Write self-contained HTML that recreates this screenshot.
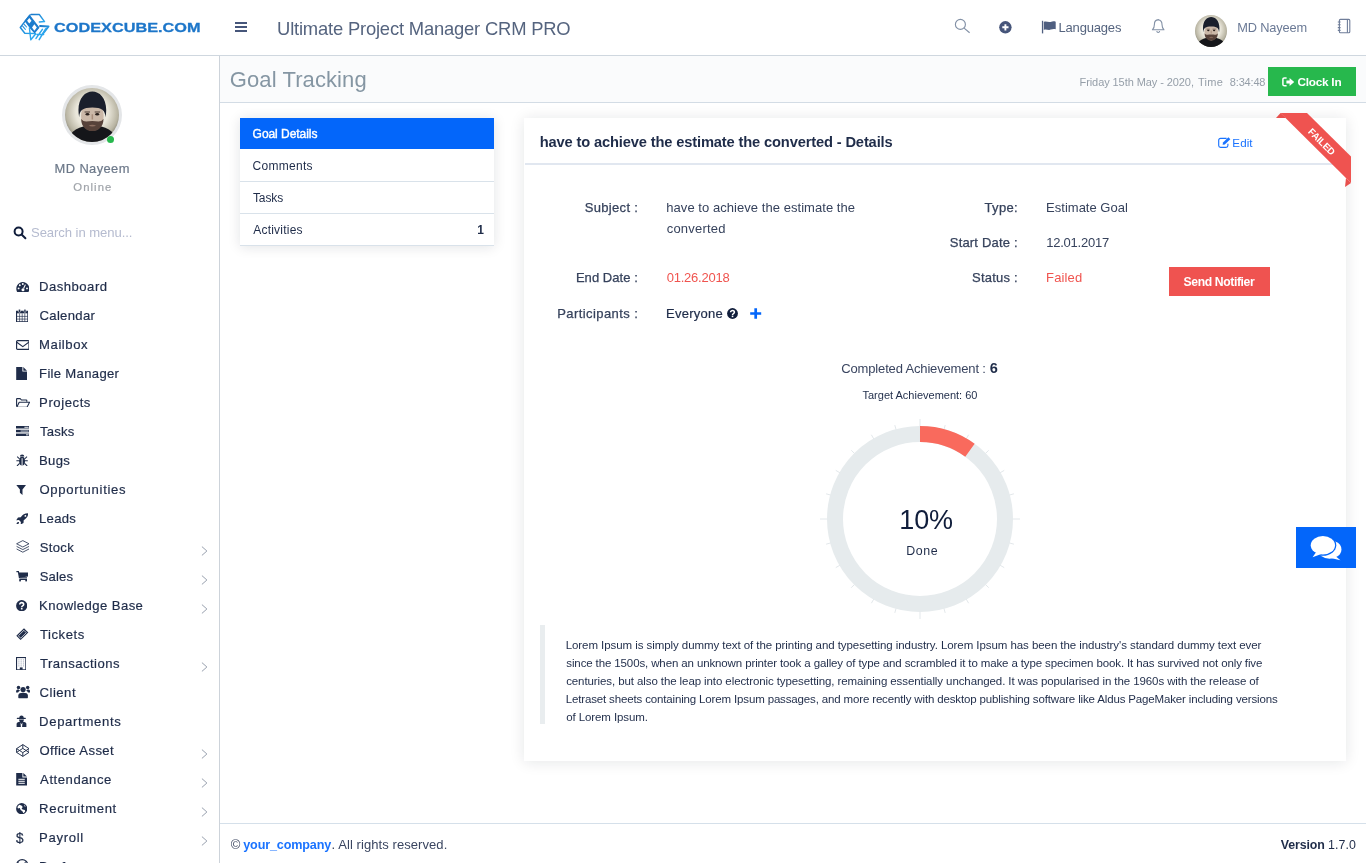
<!DOCTYPE html>
<html>
<head>
<meta charset="utf-8">
<title>Goal Tracking</title>
<style>
*{box-sizing:border-box;margin:0;padding:0}
html,body{width:1366px;height:863px;overflow:hidden;background:#fff;font-family:"Liberation Sans",sans-serif;color:#1f2c49}
.a{position:absolute;white-space:nowrap;line-height:20px}
.s{position:absolute;display:block}
</style>
</head>
<body>
<div id="w" style="position:absolute;left:0;top:0;width:1366px;height:863px;overflow:hidden;will-change:transform">
<div class="s" style="left:0;top:55px;width:1366px;height:1px;background:#cfd7df"></div>
<div class="s" style="left:219px;top:56px;width:1px;height:807px;background:#cdd3da"></div>
<div class="s" style="left:220px;top:56px;width:1146px;height:46px;background:#fafbfc"></div>
<div class="s" style="left:220px;top:102px;width:1146px;height:1px;background:#d3dce5"></div>
<div class="s" style="left:220px;top:823px;width:1146px;height:1px;background:#d5e0ea"></div>
<div class="s" style="left:240px;top:118px;width:254px;height:128px;background:#fff;box-shadow:0 1px 12px rgba(20,25,40,.12)"></div>
<div class="s" style="left:240px;top:118px;width:254px;height:31px;background:#0366fa"></div>
<div class="s" style="left:240px;top:181px;width:254px;height:1px;background:#d9e2ea"></div>
<div class="s" style="left:240px;top:213px;width:254px;height:1px;background:#d9e2ea"></div>
<div class="s" style="left:240px;top:245px;width:254px;height:1px;background:#d9e2ea"></div>
<div class="s" style="left:524px;top:118px;width:822px;height:643px;background:#fff;box-shadow:0 1px 14px rgba(20,25,40,.11)"></div>
<div class="s" style="left:525px;top:163px;width:820px;height:2px;background:#e1e7f0"></div>
<svg class="s" style="left:15px;top:8px" width="40" height="40" viewBox="0 0 40 40" fill="none" stroke-linejoin="round" stroke-linecap="round">
<defs><linearGradient id="lg" x1="0" y1="0" x2="1" y2="1"><stop offset="0" stop-color="#1b78c9"/><stop offset="1" stop-color="#2cabf0"/></linearGradient></defs>
<g stroke="url(#lg)" stroke-width="1.5">
<path d="M15 7 L5.3 19.5 L9.8 25.3 L20.5 25.4"/>
<path d="M16 6.6 H24.4 L29.5 13.6 L24.4 13.9"/>
<path d="M14.6 7.6 L18.6 12.9 L23.8 19.5 L19.6 24.6 L15 19.5 L10.2 12.9 Z" fill="#1c7ccd" stroke="#1c7ccd" stroke-width="1.2"/>
<path d="M14.3 10 L16.5 12.7 L14.3 15.5 L12.1 12.7 Z" fill="#fff" stroke="none"/>
<path d="M19.4 16.3 L21.8 19.5 L19.4 22.7 L17 19.5 Z" fill="#fff" stroke="none"/>
<path d="M7.8 18.4 L10.4 21.4 M9.4 16.6 L11.6 19" stroke-width="1.1"/>
<path d="M25 18 L33.6 18.5 L27.6 26.2" stroke-width="1.8"/>
<path d="M30.6 20.8 L24.2 31.6 M27.4 21.4 L21 30.4 M28.6 26.4 L22 26.6" stroke-width="1.5" stroke="#2ba6ee"/>
<path d="M14.4 20 L15.8 31.8 L20.6 26" stroke="#2ba6ee" stroke-width="1.4"/>
</g></svg>
<svg class="s" style="left:235px;top:22px" width="12" height="10" viewBox="0 0 12 10" shape-rendering="crispEdges"><rect x="0" y="0" width="12" height="2" fill="#46567a"/><rect x="0" y="4" width="12" height="2" fill="#46567a"/><rect x="0" y="8" width="12" height="2" fill="#46567a"/></svg>
<svg class="s" style="left:954px;top:18px" width="17" height="16" viewBox="0 0 17 16" fill="none" stroke="#8391a6" stroke-width="1.15"><circle cx="6.4" cy="6.4" r="5"/><path d="M10.1 10.1 L15.6 14.8"/></svg>
<svg class="s" style="left:999px;top:20.5px" width="13" height="13" viewBox="0 0 13 13"><circle cx="6.4" cy="6.3" r="6.2" fill="#46557a"/><path d="M6.4 3.2 V9.4 M3.3 6.3 H9.5" stroke="#fff" stroke-width="1.9"/></svg>
<svg class="s" style="left:1041px;top:20px" width="16" height="14" viewBox="0 0 16 14"><rect x="0.9" y="0.8" width="1.3" height="12.6" fill="#4f5f80"/><path d="M2.8 2 C5 0.6 7.2 2.8 9.6 1.9 C11.6 1.1 13 0.9 14.7 1.7 V9.3 C12.8 8.5 11.4 9 9.8 9.6 C7.2 10.6 5 8.6 2.8 10 Z" fill="#4f5f80"/></svg>
<svg class="s" style="left:1151px;top:18px" width="15" height="16" viewBox="0 0 15 16" fill="none" stroke="#8391a6" stroke-width="1.1" stroke-linejoin="round"><path d="M7.2 1.9 C4.4 1.9 3.4 4.2 3.4 6.4 C3.4 9 2.6 10.6 1.4 11.8 H13 C11.8 10.6 11 9 11 6.4 C11 4.2 10 1.9 7.2 1.9 Z"/><path d="M5.8 13 C6 14.9 8.4 14.9 8.6 13"/><path d="M7.2 0.9 V1.9"/></svg>
<div class="s" style="left:1195px;top:15px;width:32px;height:32px;border-radius:50%;overflow:hidden"><svg width="32" height="32" viewBox="0 0 32 32"><defs><radialGradient id="g1" cx="50%" cy="45%" r="60%"><stop offset="0" stop-color="#f6f4ee"/><stop offset=".5" stop-color="#e9e6da"/><stop offset=".8" stop-color="#b9b5a3"/><stop offset="1" stop-color="#6f6c60"/></radialGradient></defs><rect width="32" height="32" fill="url(#g1)"/><path d="M1.6 32 C2.6 25 8.6 22.4 16.2 22.4 C23.8 22.4 29.8 25 30.8 32 Z" fill="#15161a"/><ellipse cx="16.2" cy="16.6" rx="6.7" ry="8.8" fill="#cbb8a8"/><path d="M8.4 17.4 C4.6 -3 27.8 -3 24 17.4 C23.8 13.2 21.8 11.6 16.2 11.6 C10.6 11.6 8.6 13.2 8.4 17.4 Z" fill="#1a1f2c"/><path d="M9.6 18.2 C9.4 28 23 28 22.8 18.2 C21.4 20.6 19.2 19.6 16.2 19.6 C13.2 19.6 11 20.6 9.6 18.2 Z" fill="#57423a"/><path d="M14 22.4 C15.2 21.6 17.2 21.6 18.4 22.4 C17.2 23 15.2 23 14 22.4 Z" fill="#8d6f61"/><ellipse cx="13.3" cy="15.6" rx="1.15" ry="0.75" fill="#2b211d"/><ellipse cx="19.1" cy="15.6" rx="1.15" ry="0.75" fill="#2b211d"/><path d="M11.6 14.2 H14.8 M17.6 14.2 H20.8" stroke="#4a3b33" stroke-width="0.6"/><path d="M16.2 15.6 V18.6" stroke="#a88d7b" stroke-width="0.9"/></svg></div>
<svg class="s" style="left:1337px;top:18px" width="14" height="16" viewBox="0 0 14 16" fill="none" stroke="#6f7d99" stroke-width="1.1"><rect x="2.4" y="1.4" width="10.4" height="13.4" rx="1"/><path d="M0.8 4 H3.6 M0.8 6.8 H3.6 M0.8 9.6 H3.6 M0.8 12.4 H3.6 M10.4 1.4 V14.8"/></svg>
<div class="s" style="left:1268px;top:67px;width:88px;height:29px;background:#27b84d"></div>
<svg class="s" style="left:1282px;top:77px" width="13" height="10" viewBox="0 0 13 10"><path d="M4.6 1 H2.4 C1.4 1 0.9 1.6 0.9 2.4 V7.4 C0.9 8.2 1.4 8.8 2.4 8.8 H4.6" fill="none" stroke="#fff" stroke-width="1.5"/><path d="M4.4 3.4 H7.6 V0.9 L12.2 4.9 L7.6 8.9 V6.4 H4.4 Z" fill="#fff"/></svg>
<div class="s" style="left:62px;top:85px;width:60px;height:60px;border-radius:50%;background:#e4e6e8"></div>
<div class="s" style="left:65px;top:88px;width:54px;height:54px;border-radius:50%;overflow:hidden"><svg width="54" height="54" viewBox="0 0 32 32"><defs><radialGradient id="g2" cx="50%" cy="45%" r="60%"><stop offset="0" stop-color="#f6f4ee"/><stop offset=".5" stop-color="#e9e6da"/><stop offset=".8" stop-color="#b9b5a3"/><stop offset="1" stop-color="#6f6c60"/></radialGradient></defs><rect width="32" height="32" fill="url(#g2)"/><path d="M1.6 32 C2.6 25 8.6 22.4 16.2 22.4 C23.8 22.4 29.8 25 30.8 32 Z" fill="#15161a"/><ellipse cx="16.2" cy="16.6" rx="6.7" ry="8.8" fill="#cbb8a8"/><path d="M8.4 17.4 C4.6 -3 27.8 -3 24 17.4 C23.8 13.2 21.8 11.6 16.2 11.6 C10.6 11.6 8.6 13.2 8.4 17.4 Z" fill="#1a1f2c"/><path d="M9.6 18.2 C9.4 28 23 28 22.8 18.2 C21.4 20.6 19.2 19.6 16.2 19.6 C13.2 19.6 11 20.6 9.6 18.2 Z" fill="#57423a"/><path d="M14 22.4 C15.2 21.6 17.2 21.6 18.4 22.4 C17.2 23 15.2 23 14 22.4 Z" fill="#8d6f61"/><ellipse cx="13.3" cy="15.6" rx="1.15" ry="0.75" fill="#2b211d"/><ellipse cx="19.1" cy="15.6" rx="1.15" ry="0.75" fill="#2b211d"/><path d="M11.6 14.2 H14.8 M17.6 14.2 H20.8" stroke="#4a3b33" stroke-width="0.6"/><path d="M16.2 15.6 V18.6" stroke="#a88d7b" stroke-width="0.9"/></svg></div>
<div class="s" style="left:107px;top:135.8px;width:7.3px;height:7.3px;border-radius:50%;background:#27b84d"></div>
<svg class="s" style="left:12.6px;top:226px" width="14" height="14" viewBox="0 0 14 14" fill="none" stroke="#101d3b" stroke-width="2"><circle cx="5.6" cy="5.5" r="4"/><path d="M8.6 8.6 L12.4 12.2" stroke-linecap="round"/></svg>
<svg class="s" style="left:15.8px;top:282px" width="13.6" height="10" viewBox="0 0 13.6 10"><path d="M6.8 0 A6.8 6.8 0 0 0 1 9.8 C1.2 10 1.4 10 1.6 10 H12 C12.2 10 12.4 10 12.6 9.8 A6.8 6.8 0 0 0 6.8 0 Z" fill="#1f2c49"/><circle cx="2.6" cy="6.4" r="0.95" fill="#fff"/><circle cx="3.8" cy="3.2" r="0.95" fill="#fff"/><circle cx="6.8" cy="2" r="0.95" fill="#fff"/><circle cx="11" cy="6.4" r="0.95" fill="#fff"/><path d="M9.4 2.6 L7.6 6.6" stroke="#fff" stroke-width="1.1"/><circle cx="7" cy="7.8" r="1.5" fill="#fff"/></svg>
<svg class="s" style="left:15.8px;top:308.6px" width="12.4" height="13.4" viewBox="0 0 12.4 13.4"><rect x="0.55" y="2.3" width="11.3" height="10.5" fill="none" stroke="#1f2c49" stroke-width="1.1"/><rect x="0.55" y="2.3" width="11.3" height="2" fill="#1f2c49"/><path d="M0.6 7.4 H11.8 M0.6 10.1 H11.8 M3.6 4.4 V12.8 M6.2 4.4 V12.8 M8.8 4.4 V12.8" stroke="#1f2c49" stroke-width="0.65"/><rect x="2.5" y="0.2" width="1.9" height="3.2" rx="0.8" fill="#1f2c49" stroke="#fff" stroke-width="0.5"/><rect x="8" y="0.2" width="1.9" height="3.2" rx="0.8" fill="#1f2c49" stroke="#fff" stroke-width="0.5"/></svg>
<svg class="s" style="left:15.8px;top:340px" width="13.6" height="10" viewBox="0 0 13.6 10"><rect x="0.6" y="0.6" width="12.4" height="8.8" rx="1" fill="none" stroke="#1f2c49" stroke-width="1.15"/><path d="M0.8 2.2 L6.8 6.6 L12.8 2.2" fill="none" stroke="#1f2c49" stroke-width="1.15"/></svg>
<svg class="s" style="left:15.8px;top:367px" width="11.4" height="13.2" viewBox="0 0 11.4 13.2"><path d="M0.2 0 H6.4 V4.6 H11 V13.2 H0.2 Z" fill="#1f2c49"/><path d="M7.3 0 L11 3.7 H7.3 Z" fill="#1f2c49"/></svg>
<svg class="s" style="left:15.8px;top:397.6px" width="14.4" height="9.8" viewBox="0 0 14.4 9.8"><path d="M0.6 8.6 V1.2 C0.6 0.8 0.8 0.6 1.2 0.6 H4.2 L5.4 2 H10.2 C10.6 2 10.8 2.2 10.8 2.6 V3.8" fill="none" stroke="#1f2c49" stroke-width="1.1" stroke-linejoin="round"/><path d="M0.8 9.2 L3.2 4.2 H13.6 L11 9.2 Z" fill="none" stroke="#1f2c49" stroke-width="1.1" stroke-linejoin="round"/></svg>
<svg class="s" style="left:15.8px;top:426px" width="13.6" height="10.2" viewBox="0 0 13.6 10.2"><rect x="0" y="0" width="13.4" height="2.5" fill="#1f2c49"/><rect x="0" y="3.8" width="13.4" height="2.5" fill="#1f2c49"/><rect x="0" y="7.6" width="13.4" height="2.5" fill="#1f2c49"/><rect x="8.4" y="0.8" width="4.2" height="0.9" fill="#fff"/><rect x="4.6" y="4.6" width="8" height="0.9" fill="#dfe3ea"/><rect x="10" y="8.4" width="2.6" height="0.9" fill="#fff"/></svg>
<svg class="s" style="left:16px;top:454px" width="12.2" height="12.4" viewBox="0 0 12.2 12.4"><ellipse cx="6.1" cy="7.2" rx="2.9" ry="4.4" fill="#1f2c49"/><path d="M3.9 2.6 A2.2 2.2 0 0 1 8.3 2.6 Z" fill="#1f2c49"/><path d="M0.4 6.8 H11.8 M1.2 2.6 L3.6 5 M11 2.6 L8.6 5 M1 12 L3.6 9.4 M11.2 12 L8.6 9.4" stroke="#1f2c49" stroke-width="1.05"/><path d="M6.1 4.2 V11.6" stroke="#fff" stroke-width="0.9"/></svg>
<svg class="s" style="left:15.8px;top:485px" width="10.4" height="10" viewBox="0 0 10.4 10"><path d="M0.3 0 H10.1 L6.5 4.4 V10 L3.9 7.8 V4.4 Z" fill="#1f2c49"/></svg>
<svg class="s" style="left:15.8px;top:512.6px" width="12.4" height="11.6" viewBox="0 0 12.4 11.6"><path d="M12.2 0.2 C8.6 0.2 6.6 1.6 4.8 4.2 L2 4.4 L0.2 7.2 L3 7 L4.9 8.9 L4.7 11.5 L7.5 9.9 L7.7 7.2 C10.6 5.4 12.2 3.6 12.2 0.2 Z" fill="#1f2c49"/><path d="M0.5 11.4 C0.4 9.6 1.6 8.6 2.9 9 C3.3 10.4 2.3 11.5 0.5 11.4 Z" fill="#1f2c49"/><circle cx="9.4" cy="2.9" r="0.9" fill="#fff"/></svg>
<svg class="s" style="left:15.8px;top:540px" width="13.6" height="13.2" viewBox="0 0 13.6 13.2"><path d="M6.8 0.6 L13 3.8 L6.8 7 L0.6 3.8 Z M0.6 6.4 L6.8 9.6 L13 6.4 M0.6 9 L6.8 12.2 L13 9" fill="none" stroke="#2a3754" stroke-width="0.85" stroke-linejoin="round"/></svg>
<svg class="s" style="left:15.8px;top:571.4px" width="12.4" height="10.4" viewBox="0 0 12.4 10.4"><path d="M0.4 0.7 H2.4 L3.4 6.8 H11 M3.6 8.4 H11" fill="none" stroke="#1f2c49" stroke-width="1.15"/><path d="M2.7 1.6 H12.1 V5.6 L3.4 6.8 Z" fill="#1f2c49"/><rect x="3.2" y="8.4" width="1.7" height="2" fill="#1f2c49"/><rect x="9.3" y="8.4" width="1.7" height="2" fill="#1f2c49"/></svg>
<svg class="s" style="left:15.8px;top:600px" width="11.4" height="11.4" viewBox="0 0 11.4 11.4"><circle cx="5.7" cy="5.7" r="5.6" fill="#1f2c49"/><path d="M3.7 4.5 C3.7 2 7.7 2 7.7 4.5 C7.7 5.9 5.7 5.9 5.7 7.2" fill="none" stroke="#fff" stroke-width="1.55"/><rect x="4.9" y="7.9" width="1.65" height="1.6" fill="#fff"/></svg>
<svg class="s" style="left:16px;top:628.2px" width="12.6" height="12.4" viewBox="0 0 12.6 12.4"><path d="M8 0.3 L12.3 4.6 L4.6 12.1 L0.3 7.8 Z" fill="#1f2c49"/><path d="M7.9 2.3 L10.3 4.7 L4.7 10.2 L2.3 7.8 Z" fill="none" stroke="#fff" stroke-width="0.7"/></svg>
<svg class="s" style="left:15.8px;top:656.6px" width="10.4" height="13.4" viewBox="0 0 10.4 13.4"><rect x="0.55" y="0.55" width="9.3" height="12.3" fill="none" stroke="#1f2c49" stroke-width="1.1"/><path d="M2.3 2.9 H8.1 M2.3 4.9 H8.1 M2.3 6.9 H8.1 M2.3 8.9 H8.1" stroke="#9aa2b4" stroke-width="0.9" stroke-dasharray="1.2 1.1"/><rect x="3.8" y="10.4" width="2.8" height="2.4" fill="#1f2c49"/></svg>
<svg class="s" style="left:15.6px;top:685.4px" width="14.2" height="13.4" viewBox="0 0 14.2 13.4"><circle cx="7.1" cy="4.6" r="2.6" fill="#1f2c49"/><path d="M2.9 13.2 C2.5 13.2 2.3 13 2.3 12.6 V10.4 C2.3 8.6 4.2 7.8 7.1 7.8 C10 7.8 11.9 8.6 11.9 10.4 V12.6 C11.9 13 11.7 13.2 11.3 13.2 Z" fill="#1f2c49"/><circle cx="2.5" cy="2.4" r="1.75" fill="#1f2c49"/><circle cx="11.7" cy="2.4" r="1.75" fill="#1f2c49"/><path d="M0.1 7.6 V6.2 C0.1 5 1.1 4.4 2.5 4.5 L4.1 5.8 C3 6.3 2.3 6.9 2.1 7.6 Z" fill="#1f2c49"/><path d="M14.1 7.6 V6.2 C14.1 5 13.1 4.4 11.7 4.5 L10.1 5.8 C11.2 6.3 11.9 6.9 12.1 7.6 Z" fill="#1f2c49"/></svg>
<svg class="s" style="left:16.2px;top:714.6px" width="10.6" height="12.6" viewBox="0 0 10.6 12.6"><path d="M3.3 2.9 C3.1 -0.3 7.9 -0.3 7.7 2.9 Z" fill="#1f2c49"/><rect x="0.8" y="2.8" width="9" height="1.2" rx="0.5" fill="#1f2c49"/><path d="M3 4.6 H8 C8 5.6 7.4 6.2 7 6.5 L9.6 7.4 C10.2 7.8 10.4 8.4 10.4 9 V12.4 H0.6 V9 C0.6 8.4 0.8 7.8 1.4 7.4 L4 6.5 C3.6 6.2 3 5.6 3 4.6 Z" fill="#1f2c49"/><path d="M4.5 7.6 L5.5 9.2 L6.5 7.6 L6.1 12 H4.9 Z" fill="#fff"/></svg>
<svg class="s" style="left:15.8px;top:743.8px" width="13.6" height="13" viewBox="0 0 13.6 13"><path d="M6.8 0.6 L13 4.6 V8.4 L6.8 12.4 L0.6 8.4 V4.6 Z M0.6 4.6 L6.8 8.6 L13 4.6 M0.6 8.4 L6.8 4.4 L13 8.4 M6.8 0.6 V4.4 M6.8 8.6 V12.4" fill="none" stroke="#1f2c49" stroke-width="0.95" stroke-linejoin="round"/></svg>
<svg class="s" style="left:15.8px;top:773.2px" width="11.4" height="12.6" viewBox="0 0 11.4 12.6"><path d="M0.2 0 H6.4 V4.4 H11 V12.6 H0.2 Z" fill="#1f2c49"/><path d="M7.3 0 L11 3.6 H7.3 Z" fill="#1f2c49"/><path d="M2.4 6.3 H8.8 M2.4 8.3 H8.8 M2.4 10.3 H8.8" stroke="#fff" stroke-width="1"/></svg>
<svg class="s" style="left:15.8px;top:802.8px" width="11.4" height="11.4" viewBox="0 0 11.4 11.4"><circle cx="5.7" cy="5.7" r="5.6" fill="#1f2c49"/><path d="M3.2 1.8 L5.4 2.4 L6.8 4 L5.6 5.6 L6.6 6.6 L8.8 7 L9.2 8.6 L7.4 10.2 L6.4 8.2 L4.6 7 L3.8 5 L2 5.6 L1.4 4 Z" fill="#fff"/><path d="M8 1.6 L9.8 3.4 L8.6 3.6 Z" fill="#fff"/></svg>
<svg class="s" style="left:15.8px;top:859px" width="12.4" height="12.4" viewBox="0 0 12.4 12.4"><circle cx="6.2" cy="6.2" r="5.6" fill="none" stroke="#1f2c49" stroke-width="1.1"/><path d="M1.6 3.4 C5 5 8 8 9 11.4 M0.8 7 C4.6 7 8.4 5.2 10.4 2.2" fill="none" stroke="#1f2c49" stroke-width="0.9"/></svg>
<div class="a" id="dollar" style="left:15.9px;top:829px;font-size:13.6px;color:#1f2c49;-webkit-text-stroke:.2px #1f2c49;transform:scaleY(1.06);transform-origin:50% 60%">$</div>
<svg class="s" style="left:201px;top:546.2px" width="7" height="10" viewBox="0 0 7 10" fill="none" stroke="#98a0ae" stroke-width="1"><path d="M0.9 0.6 L5.9 5 L0.9 9.4"/></svg>
<svg class="s" style="left:201px;top:575.2px" width="7" height="10" viewBox="0 0 7 10" fill="none" stroke="#98a0ae" stroke-width="1"><path d="M0.9 0.6 L5.9 5 L0.9 9.4"/></svg>
<svg class="s" style="left:201px;top:604.2px" width="7" height="10" viewBox="0 0 7 10" fill="none" stroke="#98a0ae" stroke-width="1"><path d="M0.9 0.6 L5.9 5 L0.9 9.4"/></svg>
<svg class="s" style="left:201px;top:662.2px" width="7" height="10" viewBox="0 0 7 10" fill="none" stroke="#98a0ae" stroke-width="1"><path d="M0.9 0.6 L5.9 5 L0.9 9.4"/></svg>
<svg class="s" style="left:201px;top:749.2px" width="7" height="10" viewBox="0 0 7 10" fill="none" stroke="#98a0ae" stroke-width="1"><path d="M0.9 0.6 L5.9 5 L0.9 9.4"/></svg>
<svg class="s" style="left:201px;top:778.2px" width="7" height="10" viewBox="0 0 7 10" fill="none" stroke="#98a0ae" stroke-width="1"><path d="M0.9 0.6 L5.9 5 L0.9 9.4"/></svg>
<svg class="s" style="left:201px;top:807.2px" width="7" height="10" viewBox="0 0 7 10" fill="none" stroke="#98a0ae" stroke-width="1"><path d="M0.9 0.6 L5.9 5 L0.9 9.4"/></svg>
<svg class="s" style="left:201px;top:836.2px" width="7" height="10" viewBox="0 0 7 10" fill="none" stroke="#98a0ae" stroke-width="1"><path d="M0.9 0.6 L5.9 5 L0.9 9.4"/></svg>
<svg class="s" style="left:201px;top:865.2px" width="7" height="10" viewBox="0 0 7 10" fill="none" stroke="#98a0ae" stroke-width="1"><path d="M0.9 0.6 L5.9 5 L0.9 9.4"/></svg>
<svg class="s" style="left:1217.5px;top:136.6px" width="13" height="11" viewBox="0 0 13 11" fill="none" stroke="#1a73ff" stroke-width="1.15"><path d="M8.6 1.4 H2.6 C1.4 1.4 0.7 2.1 0.7 3.2 V8.5 C0.7 9.6 1.4 10.3 2.6 10.3 H8 C9.2 10.3 9.9 9.6 9.9 8.5 V6.8"/><path d="M4.6 7.8 L5 5.6 L10.4 0.3 L12.3 2.2 L6.8 7.4 Z" fill="#1a73ff" stroke="none"/></svg>
<svg class="s" style="left:726.8px;top:308px" width="11" height="11" viewBox="0 0 11.4 11.4"><circle cx="5.7" cy="5.7" r="5.6" fill="#101d3b"/><path d="M3.7 4.5 C3.7 2 7.7 2 7.7 4.5 C7.7 5.9 5.7 5.9 5.7 7.2" fill="none" stroke="#fff" stroke-width="1.55"/><rect x="4.9" y="7.9" width="1.65" height="1.6" fill="#fff"/></svg>
<svg class="s" style="left:750.2px;top:307.8px" width="11.4" height="11" viewBox="0 0 11.4 11"><path d="M5.7 0.2 V10.8 M0.2 5.5 H11.2" stroke="#0366fa" stroke-width="2.7"/></svg>
<div class="s" style="left:1169px;top:267px;width:101px;height:29px;background:#ef5350"></div>
<svg class="s" style="left:800px;top:400px" width="240" height="240" viewBox="800 400 240 240"><path d="M920.0 427.0 L920.0 419.0 M943.8 430.1 L945.2 425.1 M966.0 439.3 L968.6 434.8 M985.1 453.9 L988.7 450.3 M999.7 473.0 L1004.2 470.4 M1008.9 495.2 L1013.9 493.8 M1012.0 519.0 L1020.0 519.0 M1008.9 542.8 L1013.9 544.2 M999.7 565.0 L1004.2 567.6 M985.1 584.1 L988.7 587.7 M966.0 598.7 L968.6 603.2 M943.8 607.9 L945.2 612.9 M920.0 611.0 L920.0 619.0 M896.2 607.9 L894.8 612.9 M874.0 598.7 L871.4 603.2 M854.9 584.1 L851.3 587.7 M840.3 565.0 L835.8 567.6 M831.1 542.8 L826.1 544.2 M828.0 519.0 L820.0 519.0 M831.1 495.2 L826.1 493.8 M840.3 473.0 L835.8 470.4 M854.9 453.9 L851.3 450.3 M874.0 439.3 L871.4 434.8 M896.2 430.1 L894.8 425.1" stroke="#e3e8eb" stroke-width="1" fill="none"/><circle cx="920" cy="519" r="85" fill="none" stroke="#e6ebed" stroke-width="16"/><path d="M920 434 A85 85 0 0 1 969.96 450.23" fill="none" stroke="#f96a5d" stroke-width="16"/></svg>
<div class="s" style="left:540px;top:625px;width:5px;height:99px;background:#e9edef"></div>
<svg class="s" style="left:1270px;top:108px" width="90" height="90" viewBox="1270 108 90 90">
<path d="M1276 118 L1280.5 113 L1286 118 Z" fill="#e8504d"/>
<path d="M1346 178 L1351 183 L1345 187 Z" fill="#e8504d"/>
<path d="M1280.5 113 L1307 113 L1351 156.5 L1351 183 Z" fill="#ef5350"/>
<text x="1321.8" y="141.6" transform="rotate(45 1321.8 141.6)" text-anchor="middle" dominant-baseline="central" font-family="Liberation Sans, sans-serif" font-size="9.6" font-weight="bold" fill="#fff" letter-spacing="-0.1">FAILED</text>
</svg>
<div class="s" style="left:1296px;top:527px;width:60px;height:41px;background:#0366fa"></div>
<svg class="s" style="left:1310px;top:535px" width="33" height="26.8" viewBox="0 0 32 26"><ellipse cx="19" cy="14" rx="11.5" ry="9" fill="#fff"/><path d="M24 20 L29.5 24.5 L19 22 Z" fill="#fff"/><ellipse cx="12.5" cy="10" rx="13" ry="10.2" fill="#0366fa"/><ellipse cx="12.5" cy="10" rx="11.8" ry="9" fill="#fff"/><path d="M6 16.5 L2.5 21.5 L11 18.5 Z" fill="#fff"/></svg>
<div class="a" id="logotxt" style="left:54.29px;top:18px;font-size:13.5px;color:#1d76c9;font-weight:bold;transform:scaleX(1.2061);transform-origin:0 0;-webkit-text-stroke:.3px #1d76c9">CODEXCUBE.COM</div>
<div class="a" id="apptitle" style="left:277.05px;top:19px;font-size:18.4px;color:#55647f;letter-spacing:-0.188px">Ultimate Project Manager CRM PRO</div>
<div class="a" id="lang" style="left:1058.48px;top:18px;font-size:13px;color:#55647f;letter-spacing:-0.177px">Languages</div>
<div class="a" id="uname" style="left:1237.25px;top:18px;font-size:12.8px;color:#6b7a96;letter-spacing:-0.145px">MD Nayeem</div>
<div class="a" id="ptitle" style="left:229.77px;top:70px;font-size:22px;color:#8596a3;letter-spacing:0.095px">Goal Tracking</div>
<div class="a" id="pd1" style="left:1079.5px;top:72px;font-size:11px;color:#959ea8;letter-spacing:-0.078px">Friday 15th May - 2020,</div>
<div class="a" id="pd2" style="left:1198.1px;top:72px;font-size:11px;color:#959ea8;letter-spacing:0.211px">Time</div>
<div class="a" id="pd3" style="left:1229.85px;top:72px;font-size:11px;color:#959ea8;letter-spacing:-0.181px">8:34:48</div>
<div class="a" id="clock" style="left:1297.55px;top:72px;font-size:11.8px;color:#fff;font-weight:bold;letter-spacing:-0.263px">Clock In</div>
<div class="a" id="sname" style="left:54.59px;top:159px;font-size:12.9px;color:#6c7889;letter-spacing:0.399px;-webkit-text-stroke:.2px #6c7889">MD Nayeem</div>
<div class="a" id="sonline" style="left:73.3px;top:177px;font-size:11.3px;color:#a0a4aa;letter-spacing:1.064px;-webkit-text-stroke:.2px #a0a4aa">Online</div>
<div class="a" id="ssearch" style="left:30.99px;top:223px;font-size:13.1px;color:#b5bbcf;letter-spacing:-0.074px">Search in menu...</div>
<div class="a" id="m0" style="left:39.08px;top:277px;font-size:13.1px;color:#1f2c49;letter-spacing:0.484px;-webkit-text-stroke:.2px #1f2c49">Dashboard</div>
<div class="a" id="m1" style="left:39.49px;top:306px;font-size:13.1px;color:#1f2c49;letter-spacing:0.331px;-webkit-text-stroke:.2px #1f2c49">Calendar</div>
<div class="a" id="m2" style="left:39.08px;top:335px;font-size:13.1px;color:#1f2c49;letter-spacing:0.564px;-webkit-text-stroke:.2px #1f2c49">Mailbox</div>
<div class="a" id="m3" style="left:39.08px;top:364px;font-size:13.1px;color:#1f2c49;letter-spacing:0.312px;-webkit-text-stroke:.2px #1f2c49">File Manager</div>
<div class="a" id="m4" style="left:39.08px;top:393px;font-size:13.1px;color:#1f2c49;letter-spacing:0.573px;-webkit-text-stroke:.2px #1f2c49">Projects</div>
<div class="a" id="m5" style="left:39.9px;top:422px;font-size:13.1px;color:#1f2c49;letter-spacing:0.257px;-webkit-text-stroke:.2px #1f2c49">Tasks</div>
<div class="a" id="m6" style="left:39.08px;top:451px;font-size:13.1px;color:#1f2c49;letter-spacing:0.291px;-webkit-text-stroke:.2px #1f2c49">Bugs</div>
<div class="a" id="m7" style="left:39.49px;top:480px;font-size:13.1px;color:#1f2c49;letter-spacing:0.684px;-webkit-text-stroke:.2px #1f2c49">Opportunities</div>
<div class="a" id="m8" style="left:39.08px;top:509px;font-size:13.1px;color:#1f2c49;letter-spacing:0.26px;-webkit-text-stroke:.2px #1f2c49">Leads</div>
<div class="a" id="m9" style="left:39.69px;top:538px;font-size:13.1px;color:#1f2c49;letter-spacing:0.335px;-webkit-text-stroke:.2px #1f2c49">Stock</div>
<div class="a" id="m10" style="left:39.69px;top:567px;font-size:13.1px;color:#1f2c49;letter-spacing:0.162px;-webkit-text-stroke:.2px #1f2c49">Sales</div>
<div class="a" id="m11" style="left:39.08px;top:596px;font-size:13.1px;color:#1f2c49;letter-spacing:0.426px;-webkit-text-stroke:.2px #1f2c49">Knowledge Base</div>
<div class="a" id="m12" style="left:39.9px;top:625px;font-size:13.1px;color:#1f2c49;letter-spacing:0.585px;-webkit-text-stroke:.2px #1f2c49">Tickets</div>
<div class="a" id="m13" style="left:39.9px;top:654px;font-size:13.1px;color:#1f2c49;letter-spacing:0.473px;-webkit-text-stroke:.2px #1f2c49">Transactions</div>
<div class="a" id="m14" style="left:39.49px;top:683px;font-size:13.1px;color:#1f2c49;letter-spacing:0.515px;-webkit-text-stroke:.2px #1f2c49">Client</div>
<div class="a" id="m15" style="left:39.08px;top:712px;font-size:13.1px;color:#1f2c49;letter-spacing:0.674px;-webkit-text-stroke:.2px #1f2c49">Departments</div>
<div class="a" id="m16" style="left:39.49px;top:741px;font-size:13.1px;color:#1f2c49;letter-spacing:0.417px;-webkit-text-stroke:.2px #1f2c49">Office Asset</div>
<div class="a" id="m17" style="left:40.1px;top:770px;font-size:13.1px;color:#1f2c49;letter-spacing:0.55px;-webkit-text-stroke:.2px #1f2c49">Attendance</div>
<div class="a" id="m18" style="left:39.08px;top:799px;font-size:13.1px;color:#1f2c49;letter-spacing:0.656px;-webkit-text-stroke:.2px #1f2c49">Recruitment</div>
<div class="a" id="m19" style="left:39.08px;top:828px;font-size:13.1px;color:#1f2c49;letter-spacing:0.691px;-webkit-text-stroke:.2px #1f2c49">Payroll</div>
<div class="a" id="m20" style="left:39.08px;top:857px;font-size:13.1px;color:#1f2c49;letter-spacing:0.646px;-webkit-text-stroke:.2px #1f2c49">Performance</div>
<div class="a" id="t0" style="left:252.6px;top:124px;font-size:12px;color:#fff;letter-spacing:-0.051px;-webkit-text-stroke:.4px #fff">Goal Details</div>
<div class="a" id="t1" style="left:252.6px;top:156px;font-size:12px;color:#1f2c49;letter-spacing:0.269px">Comments</div>
<div class="a" id="t2" style="left:252.95px;top:188px;font-size:12px;color:#1f2c49;letter-spacing:-0.106px">Tasks</div>
<div class="a" id="t3" style="left:253.2px;top:220px;font-size:12px;color:#1f2c49;letter-spacing:0.228px">Activities</div>
<div class="a" id="t4" style="left:477.35px;top:220px;font-size:12px;color:#1f2c49;font-weight:bold">1</div>
<div class="a" id="ctitle" style="left:539.68px;top:132px;font-size:14.7px;color:#1f2c49;font-weight:bold;letter-spacing:-0.153px">have to achieve the estimate the converted - Details</div>
<div class="a" id="edit" style="left:1232.35px;top:133px;font-size:11.6px;color:#1a73ff;letter-spacing:0.078px">Edit</div>
<div class="a" id="l1" style="left:584.69px;top:198px;font-size:13px;color:#36425c;letter-spacing:0.325px;-webkit-text-stroke:.25px #36425c">Subject :</div>
<div class="a" id="v1a" style="left:666.29px;top:198px;font-size:13px;color:#36425c;letter-spacing:0.051px">have to achieve the estimate the</div>
<div class="a" id="v1b" style="left:666.69px;top:219px;font-size:13px;color:#36425c;letter-spacing:0.206px">converted</div>
<div class="a" id="l2" style="left:575.88px;top:268px;font-size:13px;color:#36425c;letter-spacing:0.063px;-webkit-text-stroke:.25px #36425c">End Date :</div>
<div class="a" id="v2" style="left:666.69px;top:268px;font-size:13px;color:#f0544f;letter-spacing:-0.226px">01.26.2018</div>
<div class="a" id="l3" style="left:557.18px;top:304px;font-size:13px;color:#36425c;letter-spacing:0.427px;-webkit-text-stroke:.25px #36425c">Participants :</div>
<div class="a" id="v3" style="left:666.08px;top:304px;font-size:13px;color:#1f2c49;letter-spacing:0.246px;-webkit-text-stroke:.2px #1f2c49">Everyone</div>
<div class="a" id="l4" style="left:984.6px;top:198px;font-size:13px;color:#36425c;letter-spacing:0.296px;-webkit-text-stroke:.25px #36425c">Type:</div>
<div class="a" id="v4" style="left:1046.08px;top:198px;font-size:13px;color:#36425c;letter-spacing:0.011px">Estimate Goal</div>
<div class="a" id="l5" style="left:949.79px;top:233px;font-size:13px;color:#36425c;letter-spacing:0.185px;-webkit-text-stroke:.25px #36425c">Start Date :</div>
<div class="a" id="v5" style="left:1046.29px;top:233px;font-size:13px;color:#36425c;letter-spacing:-0.247px">12.01.2017</div>
<div class="a" id="l6" style="left:972.09px;top:268px;font-size:13px;color:#36425c;letter-spacing:0.2px;-webkit-text-stroke:.25px #36425c">Status :</div>
<div class="a" id="v6" style="left:1046.08px;top:268px;font-size:13px;color:#f0544f;letter-spacing:0.128px">Failed</div>
<div class="a" id="notif" style="left:1183.55px;top:272px;font-size:12.2px;color:#fff;font-weight:bold;letter-spacing:-0.393px">Send Notifier</div>
<div class="a" id="comp" style="left:841.29px;top:359px;font-size:13px;color:#3a4560;letter-spacing:-0.158px">Completed Achievement :</div>
<div class="a" id="six" style="left:989.65px;top:358px;font-size:14.5px;color:#1f2c49;font-weight:bold">6</div>
<div class="a" id="targ" style="left:862.5px;top:385px;font-size:11px;color:#1f2c49;letter-spacing:-0.002px">Target Achievement: 60</div>
<div class="a" id="pct" style="left:899.21px;top:510px;font-size:27px;color:#101d3b;letter-spacing:-0.074px">10%</div>
<div class="a" id="done" style="left:906.3px;top:541px;font-size:12.4px;color:#1f2c49;letter-spacing:0.534px">Done</div>
<div class="a" id="lo0" style="left:565.7px;top:635px;font-size:11.5px;color:#1f2c49;letter-spacing:-0.065px">Lorem Ipsum is simply dummy text of the printing and typesetting industry. Lorem Ipsum has been the industry&#x27;s standard dummy text ever</div>
<div class="a" id="lo1" style="left:566.3px;top:653px;font-size:11.5px;color:#1f2c49;letter-spacing:-0.121px">since the 1500s, when an unknown printer took a galley of type and scrambled it to make a type specimen book. It has survived not only five</div>
<div class="a" id="lo2" style="left:566.15px;top:671px;font-size:11.5px;color:#1f2c49;letter-spacing:-0.093px">centuries, but also the leap into electronic typesetting, remaining essentially unchanged. It was popularised in the 1960s with the release of</div>
<div class="a" id="lo3" style="left:565.7px;top:689px;font-size:11.5px;color:#1f2c49;letter-spacing:-0.149px">Letraset sheets containing Lorem Ipsum passages, and more recently with desktop publishing software like Aldus PageMaker including versions</div>
<div class="a" id="lo4" style="left:566.15px;top:707px;font-size:11.5px;color:#1f2c49;letter-spacing:-0.085px">of Lorem Ipsum.</div>
<div class="a" id="fc" style="left:230.7px;top:835px;font-size:13px;color:#3a4560">©</div>
<div class="a" id="fco" style="left:243.25px;top:835px;font-size:12.6px;color:#1a73ff;font-weight:bold;letter-spacing:-0.147px">your_company</div>
<div class="a" id="fr" style="left:331.58px;top:835px;font-size:13px;color:#3a4560;letter-spacing:0.072px">. All rights reserved.</div>
<div class="a" id="fv" style="left:1280.65px;top:835px;font-size:12.4px;color:#1f2c49;font-weight:bold;letter-spacing:-0.087px">Version</div>
<div class="a" id="fn" style="left:1328.1px;top:835px;font-size:12.4px;color:#1f2c49;letter-spacing:0.042px">1.7.0</div>
</div>
</body>
</html>
